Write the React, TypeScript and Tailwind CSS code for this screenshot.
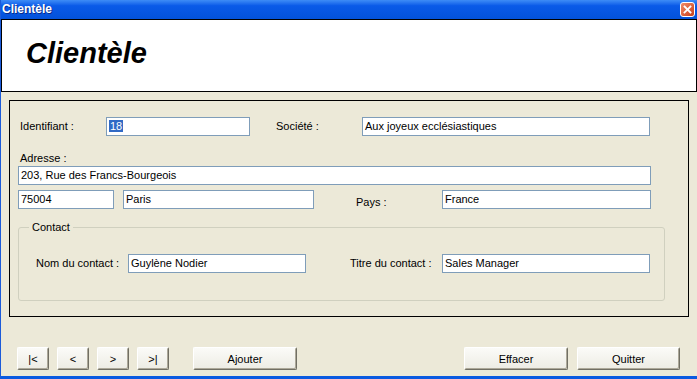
import React from "react";

const font = "font-['Liberation_Sans',Arial,sans-serif]";

function Field({ w, children }: { w: string; children?: React.ReactNode }) {
  return (
    <div
      className={`${w} h-[19px] shrink-0 border border-[#7F9DB9] bg-white pl-[2px] text-[11px] leading-[17px] text-black whitespace-nowrap overflow-hidden`}
    >
      {children}
    </div>
  );
}

function Label({ w, className = "", children }: { w: string; className?: string; children: React.ReactNode }) {
  return (
    <div className={`${w} shrink-0 text-[11px] leading-[13px] text-black whitespace-nowrap ${className}`}>
      {children}
    </div>
  );
}

function Btn({ w, className = "", children }: { w: string; className?: string; children: React.ReactNode }) {
  return (
    <button
      className={`${w} h-[23px] shrink-0 rounded-[2px] border border-t-white border-l-white border-r-[#716F64] border-b-[#716F64] bg-gradient-to-b from-[#FBFBF8] to-[#EDECE4] text-[11px] leading-[20px] text-black shadow-[inset_-1px_-1px_0_#ACA899] ${className}`}
    >
      {children}
    </button>
  );
}

export default function App() {
  return (
    <div
      className={`${font} w-[697px] h-[379px] overflow-hidden bg-[#ECE9D8] border-l border-l-[#1C5BD9] border-b-[3px] border-b-[#0A5AE0]`}
    >
      {/* title bar */}
      <div className="h-[19px] flex items-center justify-between bg-gradient-to-b from-[#3E8CF6] via-[#0A5AE8] via-30% to-[#0352DA] pl-[1px] pr-[2px]">
        <span className="text-[12px] font-bold leading-[19px] text-white [text-shadow:1px_1px_0_#0A2A8A]">
          Clientèle
        </span>
        <span className="flex h-[15px] w-[15px] items-center justify-center rounded-[3px] border border-white bg-gradient-to-br from-[#F08A66] to-[#C93D16]">
          <svg width="9" height="9" viewBox="0 0 9 9">
            <path d="M1.5 1.5 L7.5 7.5 M7.5 1.5 L1.5 7.5" stroke="white" strokeWidth="1.8" strokeLinecap="square" />
          </svg>
        </span>
      </div>

      {/* header */}
      <div className="h-[73px] border border-black bg-white pl-[24px] pt-[19px]">
        <div className="text-[29px] font-bold italic leading-[29px] text-black">Clientèle</div>
      </div>

      {/* main panel */}
      <div className="ml-[8px] mt-[8px] w-[680px] border border-black pb-[15px]">
        <div className="mt-[16px] flex items-center">
          <Label w="w-[86px]" className="ml-[10px]">Identifiant :</Label>
          <Field w="w-[144px]">
            <span className="bg-[#316AC5] px-[1px] text-white">18</span>
          </Field>
          <Label w="w-[86px]" className="ml-[26px]">Société :</Label>
          <Field w="w-[288px]">Aux joyeux ecclésiastiques</Field>
        </div>

        <Label w="w-auto" className="ml-[10px] mt-[15px] h-[14px] leading-[14px]">Adresse :</Label>
        <div className="ml-[8px] mt-[1px]">
          <Field w="w-[633px]">203, Rue des Francs-Bourgeois</Field>
        </div>

        <div className="mt-[4px] flex items-center">
          <div className="ml-[8px]">
            <Field w="w-[96px]">75004</Field>
          </div>
          <div className="ml-[9px]">
            <Field w="w-[191px]">Paris</Field>
          </div>
          <Label w="w-[86px]" className="ml-[42px] mt-[7px]">Pays :</Label>
          <Field w="w-[209px]">France</Field>
        </div>

        <fieldset className="ml-[8px] mt-[12px] w-[647px] rounded-[3px] border border-[#D0D0BF] pb-[27px]">
          <legend className="ml-[10px] px-[3px] text-[11px] leading-[13px] text-black">Contact</legend>
          <div className="mt-[20px] flex items-center">
            <Label w="w-[92px]" className="ml-[17px]">Nom du contact :</Label>
            <Field w="w-[178px]">Guylène Nodier</Field>
            <Label w="w-[92px]" className="ml-[44px]">Titre du contact :</Label>
            <Field w="w-[208px]">Sales Manager</Field>
          </div>
        </fieldset>
      </div>

      {/* buttons */}
      <div className="mt-[30px] flex">
        <Btn w="w-[32px]" className="ml-[16px]">|&lt;</Btn>
        <Btn w="w-[32px]" className="ml-[8px]">&lt;</Btn>
        <Btn w="w-[32px]" className="ml-[8px]">&gt;</Btn>
        <Btn w="w-[32px]" className="ml-[8px]">&gt;|</Btn>
        <Btn w="w-[104px]" className="ml-[24px]">Ajouter</Btn>
        <Btn w="w-[104px]" className="ml-[167px]">Effacer</Btn>
        <Btn w="w-[103px]" className="ml-[9px]">Quitter</Btn>
      </div>
    </div>
  );
}
